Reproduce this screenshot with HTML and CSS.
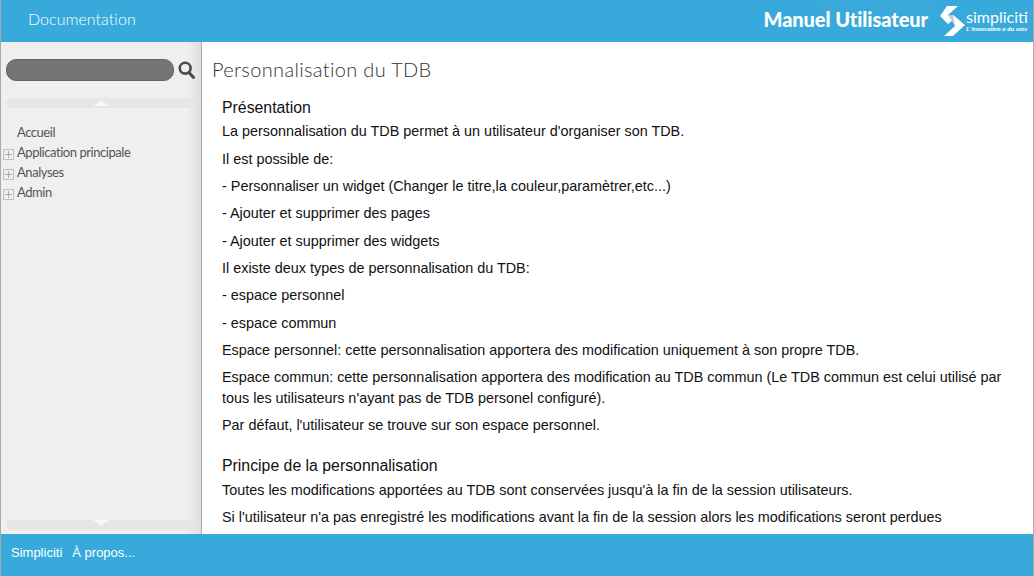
FILE: index.html
```html
<!DOCTYPE html>
<html lang="fr">
<head>
    <meta charset="utf-8">
    <title>Documentation</title>
    <link rel="stylesheet" href="styles.css">
</head>
<body>
    <div class="page">
        <header class="top">
            <div class="doc-title">Documentation</div>
            <div class="ghost-links">contenu&nbsp; menu&nbsp; outils</div>
            <div class="brand">
                <span class="manual">Manuel Utilisateur</span>
                <svg class="logo-mark" width="25" height="30" viewBox="0 0 25 30">
                    <polygon points="7,0 18,0 8,9 13,14 8,18 0,10" fill="#fff"/>
                    <polygon points="8,9 13,9 19,14 15,20" fill="#c4cbd1"/>
                    <polygon points="13,9 25,19 13,30 4,30 15,20" fill="#fff"/>
                </svg>
                <div class="logo-text">
                    <div class="logo-name">simpliciti</div>
                    <div class="logo-tag">L'innovation a du sens</div>
                </div>
            </div>
        </header>
        <div class="middle">
            <aside class="side">
                <div class="search">
                    <div class="search-box"></div>
                    <svg width="17" height="19" viewBox="0 0 17 19">
                        <circle cx="7.2" cy="7.2" r="5.4" fill="none" stroke="#4a4a4a" stroke-width="2.6"/>
                        <line x1="11" y1="11.5" x2="15.5" y2="16.5" stroke="#4a4a4a" stroke-width="3" stroke-linecap="round"/>
                    </svg>
                </div>
                <div class="scroller"><span class="arrow-up"></span></div>
                <ul class="tree">
                    <li><span class="no-toggle"></span>Accueil</li>
                    <li><span class="toggle"></span>Application principale</li>
                    <li><span class="toggle"></span>Analyses</li>
                    <li><span class="toggle"></span>Admin</li>
                </ul>
                <div class="scroller bottom"><span class="arrow-down"></span></div>
            </aside>
            <main class="content">
                <h1>Personnalisation du TDB</h1>
                <div class="article">
                    <h2>Présentation</h2>
                    <p>La personnalisation du TDB permet à un utilisateur d'organiser son TDB.</p>
                    <p>Il est possible de:</p>
                    <p>- Personnaliser un widget (Changer le titre,la couleur,paramètrer,etc...)</p>
                    <p>- Ajouter et supprimer des pages</p>
                    <p>- Ajouter et supprimer des widgets</p>
                    <p>Il existe deux types de personnalisation du TDB:</p>
                    <p>- espace personnel</p>
                    <p>- espace commun</p>
                    <p>Espace personnel: cette personnalisation apportera des modification uniquement à son propre TDB.</p>
                    <p>Espace commun: cette personnalisation apportera des modification au TDB commun (Le TDB commun est celui utilisé par tous les utilisateurs n'ayant pas de TDB personel configuré).</p>
                    <p>Par défaut, l'utilisateur se trouve sur son espace personnel.</p>
                    <h2 class="second">Principe de la personnalisation</h2>
                    <p>Toutes les modifications apportées au TDB sont conservées jusqu'à la fin de la session utilisateurs.</p>
                    <p>Si l'utilisateur n'a pas enregistré les modifications avant la fin de la session alors les modifications seront perdues</p>
                </div>
            </main>
        </div>
        <footer class="bottom-bar">
            <span>Simpliciti</span>
            <span>À propos...</span>
        </footer>
    </div>
</body>
</html>
```

FILE: styles.css
```css
html, body {
    margin: 0;
    padding: 0;
    height: 100%;
    overflow: hidden;
}
body {
    font-family: "Liberation Sans", Arial, sans-serif;
    background: #fff;
}
.page {
    height: 576px;
    display: flex;
    flex-direction: column;
    box-sizing: border-box;
    border-left: 1px solid #a9a9a9;
    border-right: 1px solid #a9a9a9;
}
.top {
    height: 42px;
    flex: none;
    background: #38a9db;
    display: flex;
    justify-content: space-between;
    align-items: center;
    position: relative;
    color: #fff;
}
.doc-title {
    font-family: Lato, sans-serif;
    font-weight: 300;
    font-size: 16px;
    letter-spacing: 0.05px;
    margin: -5px 0 0 27px;
}
.ghost-links {
    position: absolute;
    top: 0;
    left: 819px;
    font-size: 11px;
    letter-spacing: 0.5px;
    line-height: 13px;
    color: #4ba6d2;
}
.brand {
    display: flex;
    align-items: center;
    margin-right: 6px;
}
.manual {
    font-family: Lato, sans-serif;
    font-weight: 900;
    font-size: 20px;
    line-height: 18px;
    letter-spacing: -0.08px;
    margin: -5px 12px 0 0;
}
.logo-mark {
    margin: 0 1px 0 0;
}
.logo-text {
    width: 61px;
    margin-top: -1px;
}
.logo-name {
    font-family: Lato, sans-serif;
    font-size: 16px;
    line-height: 16px;
}
.logo-tag {
    font-family: "Liberation Serif", serif;
    font-style: italic;
    font-weight: bold;
    font-size: 6.5px;
    line-height: 8px;
    white-space: nowrap;
}
.middle {
    flex: 1;
    display: flex;
    min-height: 0;
}
.side {
    width: 201px;
    flex: none;
    box-sizing: border-box;
    background: linear-gradient(90deg, #efefef 0%, #efefef 93%, #dedede 100%);
    border-right: 1px solid #a9a9a9;
    padding: 17px 5px 4px;
    display: flex;
    flex-direction: column;
}
.search {
    display: flex;
    align-items: center;
    gap: 4px;
    height: 22px;
}
.search-box {
    width: 168px;
    height: 22px;
    box-sizing: border-box;
    background: #757575;
    border: 1px solid #666;
    border-radius: 10px;
}
.scroller {
    height: 10px;
    margin-top: 17px;
    width: 190px;
    background: #e6e6e6;
    border-radius: 5px;
    display: flex;
    justify-content: center;
}
.scroller.bottom {
    margin-top: auto;
}
.arrow-up {
    width: 0;
    height: 0;
    margin-top: 2px;
    border-left: 8px solid transparent;
    border-right: 8px solid transparent;
    border-bottom: 6px solid #f6f6f6;
}
.arrow-down {
    width: 0;
    height: 0;
    border-left: 8px solid transparent;
    border-right: 8px solid transparent;
    border-top: 6px solid #f6f6f6;
}
.tree {
    list-style: none;
    margin: 14px 0 0 -3px;
    padding: 0;
    font-family: Lato, sans-serif;
    font-size: 13px;
    letter-spacing: -0.45px;
    color: #555;
}
.tree li {
    height: 20px;
    line-height: 20px;
    display: flex;
    align-items: center;
}
.toggle, .no-toggle {
    width: 11px;
    height: 11px;
    margin-right: 3px;
    flex: none;
    box-sizing: border-box;
}
.toggle {
    margin-top: 4px;
    border: 1px solid #c0c0c0;
    background:
        linear-gradient(#aaa, #aaa) center / 7px 1px no-repeat,
        linear-gradient(#aaa, #aaa) center / 1px 7px no-repeat;
}
.content {
    flex: 1;
    min-width: 0;
    overflow: hidden;
    padding: 0 11px 0 10px;
}
h1 {
    font-family: Lato, sans-serif;
    font-weight: 300;
    font-size: 20px;
    letter-spacing: 0.34px;
    line-height: 26px;
    color: #333;
    margin: 14px 0 0;
}
.article {
    padding-left: 10px;
}
h2 {
    font-weight: normal;
    font-size: 15.84px;
    line-height: 20px;
    color: #111;
    margin: 16px 0 3.4px;
}
h2.second {
    margin-top: 20.6px;
    margin-bottom: 4px;
}
p {
    font-size: 14.4px;
    line-height: 1.4;
    color: #111;
    margin: 0 0 7.2px;
}
.bottom-bar {
    height: 42px;
    flex: none;
    background: #38a9db;
    color: #fff;
    font-size: 13px;
    display: flex;
    align-items: center;
    gap: 10px;
    padding: 0 0 5px 10px;
    box-sizing: border-box;
}
```
